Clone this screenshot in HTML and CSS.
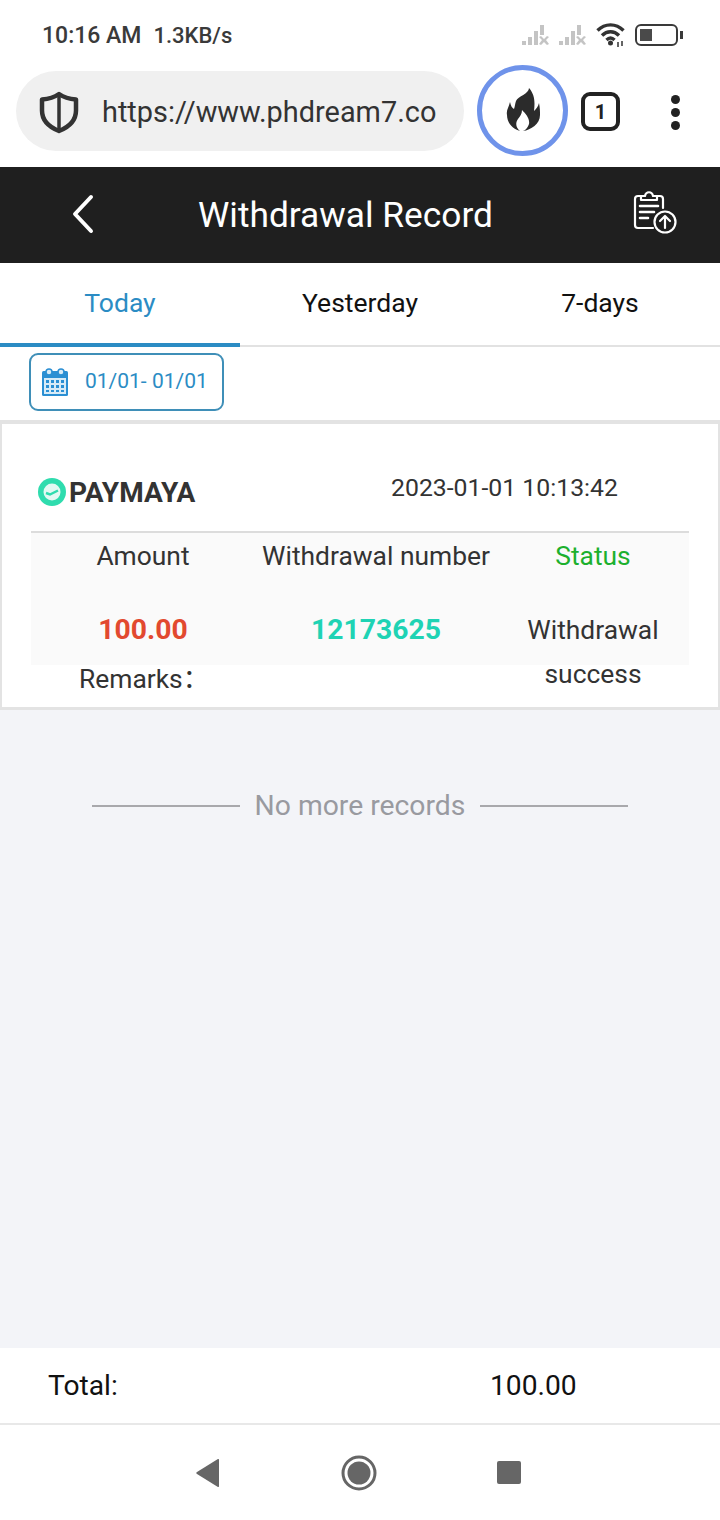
FILE: index.html
```html
<!DOCTYPE html>
<html lang="en">
  <head>
    <meta charset="UTF-8" />
    <meta name="viewport" content="width=device-width, initial-scale=1.0" />
    <title>Withdrawal Record</title>
    <link rel="stylesheet" href="styles.css">
  </head>
  <body>
    <div class="status-bar">
      <div class="status-text">10:16 AM<span class="status-speed">1.3KB/s</span></div>
      <div class="status-icons">
        <svg class="signal" width="29" height="22" viewBox="0 0 29 22" fill="#c4c4c4">
          <rect x="0" y="17" width="4" height="4" />
          <rect x="6" y="13" width="4" height="8" />
          <rect x="12" y="7" width="4" height="14" />
          <rect x="18" y="1" width="4" height="10" />
          <path d="M17 13l2-1 3 3 3-3 2 1-3 3 3 4-2 1-3-3-3 3-2-1 3-4z" />
        </svg>
        <svg class="signal" width="29" height="22" viewBox="0 0 29 22" fill="#c4c4c4">
          <rect x="0" y="17" width="4" height="4" />
          <rect x="6" y="13" width="4" height="8" />
          <rect x="12" y="7" width="4" height="14" />
          <rect x="18" y="1" width="4" height="10" />
          <path d="M17 13l2-1 3 3 3-3 2 1-3 3 3 4-2 1-3-3-3 3-2-1 3-4z" />
        </svg>
        <svg class="wifi" width="30" height="26" viewBox="0 0 30 26" fill="none" stroke="#333" stroke-width="3.400">
          <path d="M1.500 8.500C9 1 20 1 27.500 8.500" />
          <path d="M6 13.500C11 8.500 18 8.500 23 13.500" />
          <path d="M10.500 18C13 15.500 16 15.500 18.500 18" />
          <circle cx="14.500" cy="21" r="2.500" fill="#333" stroke="none" />
          <path d="M22 20v5M26 19v5" stroke-width="1.500" />
        </svg>
        <div class="battery">
          <div class="battery-level"></div>
        </div>
        <div class="battery-cap"></div>
      </div>
    </div>

    <div class="browser-bar">
      <div class="url-pill">
        <svg width="44" height="44" viewBox="0 0 44 44" fill="none" stroke="#333" stroke-width="4.500" stroke-linejoin="round">
          <path d="M22 4c5 3.500 11 5 17 5.500v11C39 30 32 37 22 41 12 37 5 30 5 20.500v-11C11 9 17 7.500 22 4z" />
          <path d="M22 4v37" stroke-width="3.500" />
        </svg>
        <span class="url-text">https://www.phdream7.co</span>
      </div>
      <div class="fire-button">
        <svg width="36" height="46" viewBox="0 0 36 46" fill="#2b2b2b">
          <path d="M24 2C24 8 13 10 11 15C10 18 10 20 9 23C7 22 6 20 5 16C4 21 1 24 2 29C2 37 8 43 15 45C11 42 10 37 13 33C15 30 17 28 17 24C21 28 25 33 24 38C23 41 21 44 18 45C26 44 35 38 35 29C35 25 35 22 34 17C33 21 31 23 29 25C30 16 30 9 24 2z" />
        </svg>
      </div>
      <div class="tab-count">1</div>
      <div class="more-dots">
        <span></span>
        <span></span>
        <span></span>
      </div>
    </div>

    <header class="page-header">
      <svg class="back-icon" width="26" height="40" viewBox="0 0 26 40" fill="none" stroke="#fff" stroke-width="4" stroke-linecap="round" stroke-linejoin="round">
        <path d="M21 3L5 20l16 17" />
      </svg>
      <h1>Withdrawal Record</h1>
      <svg class="export-icon" width="44" height="44" viewBox="0 0 44 44" fill="none" stroke="#fff" stroke-width="2.200" stroke-linecap="round" stroke-linejoin="round">
        <path d="M8 6H5a3 3 0 0 0-3 3v26a3 3 0 0 0 3 3h15" />
        <path d="M24 6h3a3 3 0 0 1 3 3v9" />
        <path d="M8 10V6h4c1-5 7-5 8 0h4v4z" />
        <path d="M7 16h18M7 22h14M7 28h8" stroke-width="2.600" />
        <circle cx="32" cy="32" r="10.500" />
        <path d="M32 38V26M27 31l5-5 5 5" />
      </svg>
    </header>

    <nav class="tabs">
      <div class="tab active">Today</div>
      <div class="tab">Yesterday</div>
      <div class="tab">7-days</div>
    </nav>

    <div class="filter-row">
      <div class="date-picker">
        <svg width="28" height="30" viewBox="0 0 28 30">
          <rect x="1" y="4" width="26" height="25" rx="1.500" fill="#2b8fd3" />
          <rect x="3" y="11" width="22" height="16" fill="#d8ebf7" />
          <g fill="#2b8fd3">
            <rect x="5" y="13" width="3" height="3" />
            <rect x="10" y="13" width="3" height="3" />
            <rect x="15" y="13" width="3" height="3" />
            <rect x="20" y="13" width="3" height="3" />
            <rect x="5" y="18" width="3" height="3" />
            <rect x="10" y="18" width="3" height="3" />
            <rect x="15" y="18" width="3" height="3" />
            <rect x="20" y="18" width="3" height="3" />
            <rect x="5" y="23" width="3" height="2" />
            <rect x="10" y="23" width="3" height="2" />
            <rect x="15" y="23" width="3" height="2" />
            <rect x="20" y="23" width="3" height="2" />
          </g>
          <circle cx="8" cy="5" r="3" fill="#d8ebf7" stroke="#2b8fd3" stroke-width="1.500" />
          <circle cx="20" cy="5" r="3" fill="#d8ebf7" stroke="#2b8fd3" stroke-width="1.500" />
        </svg>
        <span>01/01- 01/01</span>
      </div>
    </div>

    <main class="records">
      <section class="record-card">
        <div class="record-top">
          <div class="brand">
            <svg width="28" height="28" viewBox="0 0 28 28">
              <circle cx="14" cy="14" r="14" fill="#2fdcae" />
              <circle cx="14" cy="14" r="8.500" fill="#e3f9f3" />
              <path d="M8 15l4 1.500 8-4" fill="none" stroke="#2fdcae" stroke-width="2.500" />
            </svg>
            <span>PAYMAYA</span>
          </div>
          <div class="record-time">2023-01-01 10:13:42</div>
        </div>
        <div class="record-table">
          <div class="cell head">Amount</div>
          <div class="cell head">Withdrawal number</div>
          <div class="cell head status-label">Status</div>
          <div class="cell amount">100.00</div>
          <div class="cell order-no">12173625</div>
          <div class="cell status-value">Withdrawal success</div>
        </div>
        <div class="remarks">Remarks：</div>
      </section>

      <div class="no-more">
        <span class="no-more-line"></span>
        <span>No more records</span>
        <span class="no-more-line"></span>
      </div>
    </main>

    <div class="total-bar">
      <span class="total-label">Total:</span>
      <span class="total-value">100.00</span>
    </div>

    <div class="system-nav">
      <svg width="24" height="28" viewBox="0 0 24 28" fill="#666">
        <path d="M23 1v26a1 1 0 0 1-1.500.8L1 15a1.200 1.200 0 0 1 0-2L21.500.2A1 1 0 0 1 23 1z" />
      </svg>
      <svg width="36" height="36" viewBox="0 0 36 36">
        <circle cx="18" cy="18" r="16" fill="none" stroke="#666" stroke-width="3" />
        <circle cx="18" cy="18" r="11.500" fill="#666" />
      </svg>
      <div class="nav-square"></div>
    </div>
  </body>
</html>
```

FILE: styles.css
```css
/* Global styles */
* {
  margin: 0;
  padding: 0;
  box-sizing: border-box;
  font-family: Roboto, sans-serif;
}

body {
  width: 720px;
  height: 1520px;
  background-color: #fff;
  color: #333;
  display: flex;
  flex-direction: column;
  overflow: hidden;
}

/* Phone status bar */
.status-bar {
  height: 58px;
  padding: 12px 37px 0 42px;
  display: flex;
  justify-content: space-between;
  align-items: center;
}

.status-text {
  font-size: 23px;
  font-weight: 500;
  color: #3a3a3a;
}

.status-speed {
  margin-left: 12px;
  font-size: 22px;
}

.status-icons {
  display: flex;
  align-items: center;
}

.signal {
  margin-right: 8px;
}

.wifi {
  margin-right: 9px;
}

.battery {
  width: 43px;
  height: 22px;
  border: 2.500px solid #3a3a3a;
  border-radius: 6px;
  padding: 3px;
}

.battery-level {
  width: 12px;
  height: 100%;
  background: #4a4a4a;
}

.battery-cap {
  width: 3px;
  height: 8px;
  margin-left: 2px;
  background: #3a3a3a;
}

/* Browser toolbar */
.browser-bar {
  height: 109px;
  padding: 13px 0 0 16px;
  display: flex;
  align-items: flex-start;
}

.url-pill {
  width: 448px;
  height: 80px;
  background: #f0f0f0;
  border-radius: 40px;
  padding: 2px 0 0 21px;
  display: flex;
  align-items: center;
  gap: 21px;
}

.url-text {
  font-size: 28.900px;
  color: #333;
  white-space: nowrap;
}

.fire-button {
  width: 91px;
  height: 91px;
  margin: -6px 0 0 13px;
  padding-bottom: 3px;
  border: 5px solid #6f93ea;
  border-radius: 50%;
  display: flex;
  align-items: center;
  justify-content: center;
}

.tab-count {
  width: 39px;
  height: 39px;
  margin: 21px 0 0 13px;
  border: 4px solid #222;
  border-radius: 9px;
  font-size: 20px;
  font-weight: 700;
  color: #222;
  display: flex;
  align-items: center;
  justify-content: center;
}

.more-dots {
  margin: 24px 0 0 51px;
  display: flex;
  flex-direction: column;
  gap: 4px;
}

.more-dots span {
  width: 9px;
  height: 9px;
  border-radius: 50%;
  background: #222;
}

/* Page header */
.page-header {
  height: 96px;
  background-color: #1f1f1f;
  display: flex;
  align-items: center;
  padding: 0 43px 0 70px;
}

.page-header h1 {
  flex: 1;
  font-size: 35.300px;
  font-weight: 400;
  color: #fff;
  text-align: center;
  padding-right: 38px;
}

.back-icon {
  margin-top: -2px;
}

.export-icon {
  margin-top: -6px;
}

/* Tabs */
.tabs {
  height: 84px;
  display: flex;
  border-bottom: 2px solid #e2e2e2;
}

.tab {
  flex: 1;
  height: 84px;
  padding-bottom: 6px;
  font-size: 26.500px;
  color: #111;
  display: flex;
  align-items: center;
  justify-content: center;
}

.tab.active {
  color: #2b8cc4;
  padding-bottom: 2px;
  border-bottom: 4px solid #2b8cc4;
}

/* Date filter */
.filter-row {
  height: 73px;
  padding: 6px 0 0 29px;
  background: #fff;
}

.date-picker {
  width: 195px;
  height: 58px;
  border: 2px solid #3f8fb8;
  border-radius: 9px;
  padding: 0 0 2px 10px;
  display: flex;
  align-items: center;
  gap: 16px;
  font-size: 21px;
  color: #2b8cc4;
}

.date-picker svg {
  margin-top: 2px;
}

/* Record list */
.records {
  flex: 1;
  background-color: #f3f4f8;
}

.record-card {
  height: 290px;
  padding: 0 29px;
  background: #fff;
  border: 2px solid #e3e3e3;
  border-top-width: 4px;
  border-bottom-width: 3px;
}

.record-top {
  height: 109px;
  border-bottom: 2px solid #dcdcdc;
  display: flex;
  justify-content: space-between;
}

.brand {
  padding: 54px 0 0 7px;
  display: flex;
  gap: 3px;
  align-items: flex-start;
  font-size: 28px;
  font-weight: 700;
  color: #333;
}

.brand span {
  line-height: 30px;
}

.record-time {
  padding: 50px 71px 0 0;
  font-size: 24.800px;
  line-height: 28px;
  color: #333;
}

.record-table {
  height: 132px;
  background: #fafafa;
  display: grid;
  grid-template-columns: 224px 242px 192px;
  grid-template-rows: 75px 57px;
}

.cell {
  font-size: 26.400px;
  line-height: 44px;
  text-align: center;
  color: #333;
}

.head {
  padding-top: 1px;
}

.status-label {
  color: #1cb02e;
}

.amount {
  font-size: 28.300px;
  font-weight: 700;
  color: #e2492f;
}

.order-no {
  font-size: 28.300px;
  font-weight: 700;
  color: #1fd3b4;
}

.status-value {
  padding: 0 20px;
}

.remarks {
  padding-left: 48px;
  font-family: Roboto, "Noto Sans CJK SC", sans-serif;
  font-size: 26.400px;
  line-height: 28px;
  color: #333;
}

.no-more {
  margin-top: 79px;
  display: flex;
  align-items: center;
  justify-content: center;
  gap: 15px;
  font-size: 28.300px;
  color: #999aa0;
}

.no-more-line {
  width: 148px;
  height: 2px;
  background: #a8a8ac;
}

/* Footer total */
.total-bar {
  height: 77px;
  background: #fff;
  border-bottom: 2px solid #e8e8e8;
  display: flex;
  align-items: center;
  font-size: 28.200px;
  color: #111;
}

.total-label {
  width: 490px;
  padding-left: 48px;
}

/* Android nav buttons */
.system-nav {
  height: 95px;
  padding: 0 199px 0 196px;
  display: flex;
  align-items: center;
  justify-content: space-between;
}

.nav-square {
  width: 24px;
  height: 23px;
  border-radius: 2px;
  background: #666;
}
```
